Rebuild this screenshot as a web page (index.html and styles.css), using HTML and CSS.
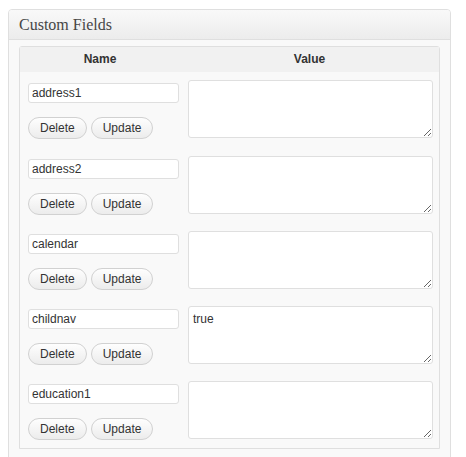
FILE: index.html
```html
<!DOCTYPE html>
<html>
<head>
    <title>Custom Fields</title>
    <link rel="stylesheet" href="styles.css">
</head>
<body>
    <div class="postbox">
        <h3 class="hndle">Custom Fields</h3>
        <div class="inside">
            <table class="list-table">
                <thead>
                    <tr>
                        <th class="col-name">Name</th>
                        <th>Value</th>
                    </tr>
                </thead>
                <tbody>
                    <tr>
                        <td class="left">
                            <input type="text" value="address1">
                            <div class="submit"><button>Delete</button><button>Update</button></div>
                        </td>
                        <td class="value"><textarea></textarea></td>
                    </tr>
                    <tr>
                        <td class="left">
                            <input type="text" value="address2">
                            <div class="submit"><button>Delete</button><button>Update</button></div>
                        </td>
                        <td class="value"><textarea></textarea></td>
                    </tr>
                    <tr>
                        <td class="left">
                            <input type="text" value="calendar">
                            <div class="submit"><button>Delete</button><button>Update</button></div>
                        </td>
                        <td class="value"><textarea></textarea></td>
                    </tr>
                    <tr>
                        <td class="left">
                            <input type="text" value="childnav">
                            <div class="submit"><button>Delete</button><button>Update</button></div>
                        </td>
                        <td class="value"><textarea>true</textarea></td>
                    </tr>
                    <tr>
                        <td class="left">
                            <input type="text" value="education1">
                            <div class="submit"><button>Delete</button><button>Update</button></div>
                        </td>
                        <td class="value"><textarea></textarea></td>
                    </tr>
                </tbody>
            </table>
        </div>
    </div>
</body>
</html>
```

FILE: styles.css
```css
body {
    margin: 9px 15px 0 8px;
    background: #fff;
    font-family: "Liberation Sans", Arial, sans-serif;
    font-size: 12px;
    color: #333;
}
.postbox {
    border: 1px solid #dfdfdf;
    border-radius: 4px 4px 0 0;
    background: #f9f9f9;
    height: 460px;
}
.hndle {
    margin: 0;
    padding: 6px 10px 5px;
    line-height: 18px;
    font-family: "Liberation Serif", Georgia, serif;
    font-size: 16px;
    font-weight: normal;
    color: #464646;
    background: linear-gradient(to bottom, #f9f9f9, #ececec);
    border-bottom: 1px solid #dfdfdf;
    border-radius: 3px 3px 0 0;
}
.inside {
    padding: 6px 10px 0;
}
.list-table {
    width: 100%;
    border: 1px solid #dfdfdf;
    border-spacing: 0;
    border-radius: 3px 3px 0 0;
    background: #f9f9f9;
}
.list-table th {
    padding: 5px 8px 6px;
    line-height: 14px;
    font-size: 12px;
    font-weight: bold;
    color: #333;
    background: #f1f1f1;
    text-align: center;
}
.list-table .col-name {
    width: 144px;
}
.list-table td {
    vertical-align: top;
    padding: 8px 0 9px 8px;
}
.list-table td.left {
    width: 152px;
    padding-bottom: 7px;
}
.list-table tr:first-child td.value {
    padding-bottom: 10px;
}
input {
    display: block;
    box-sizing: border-box;
    width: 151px;
    height: 20px;
    margin: 3px 0 0;
    padding: 0 3px;
    border: 1px solid #dfdfdf;
    border-radius: 3px;
    background: #fff;
    font-family: "Liberation Sans", Arial, sans-serif;
    font-size: 12px;
    color: #333;
    outline: none;
}
.submit {
    display: flex;
    gap: 4px;
    margin-top: 14px;
}
button {
    height: 22px;
    padding: 0 11px;
    border: 1px solid #d1d1d1;
    border-radius: 11px;
    background: linear-gradient(to bottom, #fefefe, #ececec);
    font-family: "Liberation Sans", Arial, sans-serif;
    font-size: 12px;
    line-height: 20px;
    color: #333;
}
textarea {
    display: block;
    box-sizing: border-box;
    width: 245px;
    height: 58px;
    margin: 0;
    padding: 5px 4px;
    border: 1px solid #dfdfdf;
    border-radius: 3px;
    background: #fff;
    font-family: "Liberation Sans", Arial, sans-serif;
    font-size: 12px;
    color: #333;
    resize: both;
    outline: none;
}
```
